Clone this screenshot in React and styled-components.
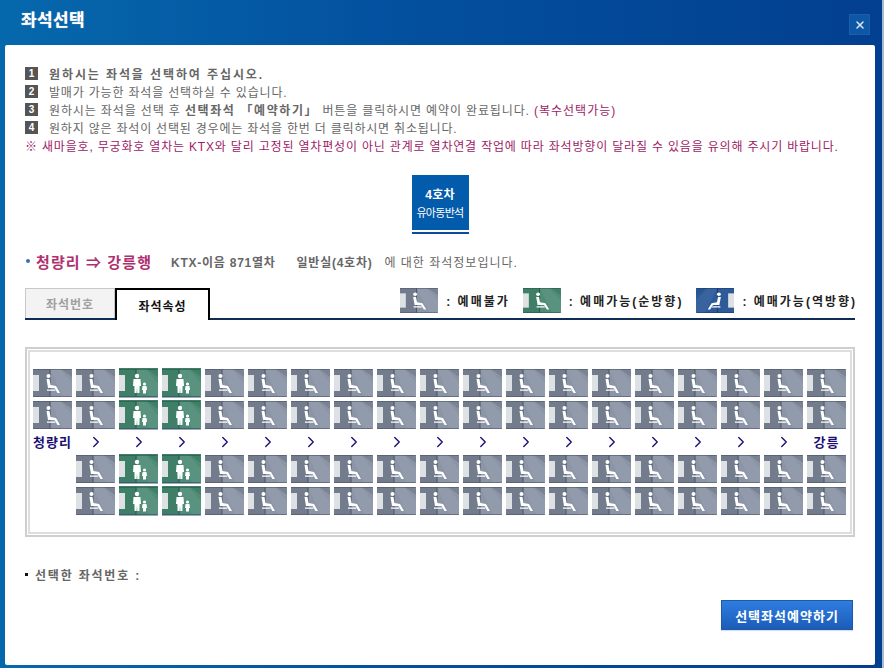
import styled, { createGlobalStyle } from 'styled-components';
import { X, ChevronRight } from 'lucide-react';

const GlobalStyle = createGlobalStyle`
  html, body {
    margin: 0;
    padding: 0;
    background: #a9bccd;
    overflow: hidden;
  }
  body {
    font-family: "Liberation Sans", "Noto Sans CJK KR", sans-serif;
    font-size: 12px;
    color: #666;
  }
`;

// --- ESTILOS ---
const Modal = styled.div`
  width: 882px;
  height: 668px;
  box-sizing: border-box;
  padding: 0 7px 3px 5px;
  display: flex;
  flex-direction: column;
  background: linear-gradient(90deg, #0668ac 0%, #03509f 45%, #033f90 100%);
`;

const TitleBar = styled.header`
  height: 45px;
  flex: none;
  display: flex;
  align-items: center;
  justify-content: space-between;
  padding: 0 5px 9px 16px;
  box-sizing: border-box;
`;

const Title = styled.h1`
  margin: 0;
  font-size: 17px;
  font-weight: 700;
  letter-spacing: 0.4px;
  color: #fff;
  text-shadow: 0 0 1px #bcd;
`;

const CloseButton = styled.button`
  width: 21px;
  height: 21px;
  margin-top: 13px;
  padding: 0;
  border: 1px solid #1a5fa8;
  background: #0d57a6;
  color: #dde6f2;
  display: flex;
  align-items: center;
  justify-content: center;
`;

const Panel = styled.main`
  flex: 1;
  background: #fff;
  border-radius: 2px;
  padding: 19px 20px 0 20px;
  display: flex;
  flex-direction: column;
`;

const Notice = styled.ol`
  list-style: none;
  margin: 0;
  padding: 0;
`;

const NoticeRow = styled.li`
  height: 18px;
  display: flex;
  align-items: center;
  gap: 11px;
  white-space: pre;
  letter-spacing: ${(p) => p.$spacing};
  font-weight: ${(p) => (p.$strong ? 700 : 400)};
  strong {
    letter-spacing: 1.6px;
  }
`;

const StepBadge = styled.span`
  width: 13px;
  height: 13px;
  flex: none;
  background: #555;
  color: #fff;
  font-size: 10px;
  font-weight: 700;
  line-height: 13px;
  text-align: center;
  letter-spacing: 0;
`;

const Accent = styled.span`
  color: #9c1c66;
  letter-spacing: 1px;
`;

const Warning = styled.li`
  height: 18px;
  display: flex;
  align-items: center;
  color: #9c1c66;
  white-space: pre;
  letter-spacing: 0.82px;
`;

const CarStrip = styled.div`
  display: flex;
  justify-content: center;
  margin-top: 21px;
`;

const CarTab = styled.div`
  width: 57px;
  height: 55px;
  background: #035bab;
  box-shadow: 0 2px 0 #fff, 0 4px 0 #0a4c97;
  color: #fff;
  display: flex;
  flex-direction: column;
  align-items: center;
  justify-content: center;
  gap: 2px;
  font-size: 11px;
  letter-spacing: -0.7px;
  strong {
    font-size: 12px;
    letter-spacing: 0.2px;
  }
`;

const RouteLine = styled.div`
  margin-top: 21px;
  height: 20px;
  display: flex;
  align-items: center;
  white-space: pre;
  font-weight: 700;
  letter-spacing: 0.75px;
`;

const Dot = styled.span`
  width: 4px;
  height: 4px;
  margin: 0 6px 0 1px;
  border-radius: 50%;
  background: #3f6fb0;
`;

const RouteName = styled.span`
  font-size: 15px;
  color: #b0306f;
  margin-right: 19px;
  letter-spacing: 1.1px;
`;

const CarClass = styled.span`
  margin-left: 21px;
  letter-spacing: 0.75px;
`;

const RouteSuffix = styled.span`
  margin-left: 12px;
  font-weight: 400;
  letter-spacing: 1px;
`;

const TabBar = styled.div`
  margin-top: 17px;
  height: 32px;
  box-sizing: border-box;
  border-bottom: 2px solid #0d2d55;
  display: flex;
  justify-content: space-between;
  align-items: flex-start;
`;

const Tabs = styled.div`
  display: flex;
`;

const Tab = styled.div`
  box-sizing: border-box;
  height: ${(p) => (p.$active ? '32px' : '30px')};
  width: ${(p) => (p.$active ? '95px' : '90px')};
  display: flex;
  align-items: center;
  justify-content: center;
  font-weight: 700;
  letter-spacing: 1px;
  background: ${(p) => (p.$active ? '#fff' : '#f3f3f3')};
  color: ${(p) => (p.$active ? '#111' : '#a0a0a0')};
  border: ${(p) => (p.$active ? '2px solid #000' : '1px solid #c8c8c8')};
  border-bottom: none;
  position: relative;
  z-index: 1;
`;

const Legend = styled.div`
  display: flex;
  gap: 15px;
`;

const LegendItem = styled.div`
  display: flex;
  align-items: center;
  gap: 8px;
  height: 25px;
  font-weight: 700;
  color: #222;
  letter-spacing: 2px;
  margin-right: -2px;
  white-space: pre;
`;

const SeatFrame = styled.section`
  margin-top: 27px;
  height: 190px;
  box-sizing: border-box;
  border: 2px solid #cfcfcf;
  padding: 1px;
  background: #fff;
`;

const SeatInner = styled.div`
  height: 100%;
  box-sizing: border-box;
  border: 2px solid #dedede;
  padding: 17px 0 0 3px;
`;

const SeatGrid = styled.div`
  display: grid;
  grid-template-columns: repeat(19, 39px);
  grid-template-rows: 28px 28px 18px 28px 28px;
  column-gap: 4px;
  row-gap: 4px;
`;

const SeatSlot = styled.div`
  width: 39px;
  height: 28px;
  box-shadow: ${(p) => (p.$open ? '0 1px 0 #a7a2d4, 0 -1px 0 #3f7f68' : 'none')};
`;

const Direction = styled.div`
  display: flex;
  align-items: center;
  justify-content: center;
  height: 17px;
  color: #1b0f75;
`;

const Station = styled(Direction)`
  font-size: 13px;
  font-weight: 700;
  letter-spacing: 1px;
  white-space: nowrap;
`;

const Footer = styled.div`
  margin-top: 29px;
  display: flex;
  flex-direction: column;
`;

const Picked = styled.div`
  display: flex;
  align-items: center;
  gap: 7px;
  height: 16px;
  font-weight: 700;
  letter-spacing: 1.8px;
`;

const Square = styled.span`
  width: 3px;
  height: 3px;
  background: #111;
`;

const ReserveButton = styled.button`
  align-self: flex-end;
  margin: 18px 2px 0 0;
  width: 132px;
  height: 30px;
  border: 1px solid #1f5aa8;
  background: linear-gradient(180deg, #2e7de0 0%, #1c5cb8 100%);
  color: #fff;
  font: 700 13px "Liberation Sans", "Noto Sans CJK KR", sans-serif;
  letter-spacing: 1px;
  box-shadow: 0 1px 1px #d4dff0;
`;

// --- ICONES ---
const seatColors = {
  taken: { left: '#727c8d', right: '#8b95a6', shade: '#5f6878', dark: '#4d5566' },
  open: { left: '#3f7f68', right: '#4f8c76', shade: '#2f6b56', dark: '#24584a' },
  reverse: { left: '#2e5a97', right: '#2c5a9a', shade: '#234a84', dark: '#1a3a70' },
};

const SittingFigure = () => (
  <g fill="#fff">
    <circle cx="15.5" cy="7" r="2" />
    <path d="M13.5 10 L16.5 10 L17.5 16 L23 17 L27 24 L24.5 24 L21.5 19 L15 19 Z" />
    <path d="M14 20.5 L22 20.5 L22.6 21.7 L14 21.7 Z" />
  </g>
);

const FamilyFigure = () => (
  <g fill="#fff">
    <circle cx="18" cy="7" r="2.2" />
    <path d="M14.5 10 L21.5 10 L22 17 L20.6 17 L20.4 24 L18.3 24 L18 18 L17.7 24 L15.6 24 L15.4 17 L14 17 Z" />
    <circle cx="25.5" cy="15" r="1.6" />
    <path d="M23.5 17 L27.5 17 L28 21 L27 21 L27 24.5 L24 24.5 L24 21 L23 21 Z" />
  </g>
);

const SeatIcon = ({ kind = 'taken', family, width = 39, height = 28 }) => {
  const c = seatColors[kind];
  const flip = kind === 'reverse' ? 'translate(39 0) scale(-1 1)' : undefined;
  return (
    <svg width={width} height={height} viewBox="0 0 39 28" preserveAspectRatio="none" style={{ display: 'block' }}>
      <g transform={flip}>
        <rect width="39" height="28" rx="1.5" fill={c.right} />
        <rect width="17" height="28" fill={c.left} />
        <path d="M17 0 L39 0 L39 8 L28 0 Z" fill={c.shade} opacity="0.4" />
        <path d="M17 0 L27 0 L39 14 L39 28 L30 28 Z" fill="#fff" opacity="0.06" />
        <rect x="16.5" width="1" height="28" fill={c.dark} />
        <rect width="39" height="1" fill={c.dark} opacity="0.6" />
        <rect y="27" width="39" height="1" fill={c.dark} opacity="0.6" />
        <rect y="6" width="6" height="16" fill="#dde1e4" />
        {family ? <FamilyFigure /> : <SittingFigure />}
      </g>
    </svg>
  );
};

const LegendSeat = ({ kind }) => <SeatIcon kind={kind} width={38} height={25} />;

// --- DADOS ---
const columns = Array.from({ length: 19 }, (_, i) => i);
const familyColumns = [2, 3];

const SeatRow = ({ skipFirst }) =>
  columns.map((col) => {
    if (skipFirst && col === 0) return <div key={col} />;
    const family = familyColumns.includes(col);
    return (
      <SeatSlot key={col} $open={family}>
        <SeatIcon kind={family ? 'open' : 'taken'} family={family} />
      </SeatSlot>
    );
  });

// --- COMPONENTE ---
export default function App() {
  return (
    <>
      <GlobalStyle />
      <Modal>
        <TitleBar>
          <Title>좌석선택</Title>
          <CloseButton aria-label="닫기">
            <X size={12} strokeWidth={3} />
          </CloseButton>
        </TitleBar>
        <Panel>
          <Notice>
            <NoticeRow $strong $spacing="1.9px">
              <StepBadge>1</StepBadge>원하시는 좌석을 선택하여 주십시오.
            </NoticeRow>
            <NoticeRow $spacing="0.82px">
              <StepBadge>2</StepBadge>발매가 가능한 좌석을 선택하실 수 있습니다.
            </NoticeRow>
            <NoticeRow $spacing="0.87px">
              <StepBadge>3</StepBadge>
              <span>
                원하시는 좌석을 선택 후 <strong>선택좌석 「예약하기」</strong> 버튼을 클릭하시면 예약이 완료됩니다.{' '}
                <Accent>(복수선택가능)</Accent>
              </span>
            </NoticeRow>
            <NoticeRow $spacing="0.8px">
              <StepBadge>4</StepBadge>원하지 않은 좌석이 선택된 경우에는 좌석을 한번 더 클릭하시면 취소됩니다.
            </NoticeRow>
            <Warning>※ 새마을호, 무궁화호 열차는 KTX와 달리 고정된 열차편성이 아닌 관계로 열차연결 작업에 따라 좌석방향이 달라질 수 있음을 유의해 주시기 바랍니다.</Warning>
          </Notice>

          <CarStrip>
            <CarTab>
              <strong>4호차</strong>
              <span>유아동반석</span>
            </CarTab>
          </CarStrip>

          <RouteLine>
            <Dot />
            <RouteName>청량리 ⇒ 강릉행</RouteName>
            KTX-이음 871열차
            <CarClass>일반실(4호차)</CarClass>
            <RouteSuffix>에 대한 좌석정보입니다.</RouteSuffix>
          </RouteLine>

          <TabBar>
            <Tabs>
              <Tab>좌석번호</Tab>
              <Tab $active>좌석속성</Tab>
            </Tabs>
            <Legend>
              <LegendItem>
                <LegendSeat kind="taken" />: 예매불가
              </LegendItem>
              <LegendItem>
                <LegendSeat kind="open" />: 예매가능(순방향)
              </LegendItem>
              <LegendItem>
                <LegendSeat kind="reverse" />: 예매가능(역방향)
              </LegendItem>
            </Legend>
          </TabBar>

          <SeatFrame>
            <SeatInner>
              <SeatGrid>
                <SeatRow />
                <SeatRow />
                {columns.map((col) => {
                  if (col === 0) return <Station key={col}>청량리</Station>;
                  if (col === 18) return <Station key={col}>강릉</Station>;
                  return (
                    <Direction key={col}>
                      <ChevronRight size={18} strokeWidth={1.8} />
                    </Direction>
                  );
                })}
                <SeatRow skipFirst />
                <SeatRow skipFirst />
              </SeatGrid>
            </SeatInner>
          </SeatFrame>

          <Footer>
            <Picked>
              <Square />
              선택한 좌석번호 :
            </Picked>
            <ReserveButton>선택좌석예약하기</ReserveButton>
          </Footer>
        </Panel>
      </Modal>
    </>
  );
}
